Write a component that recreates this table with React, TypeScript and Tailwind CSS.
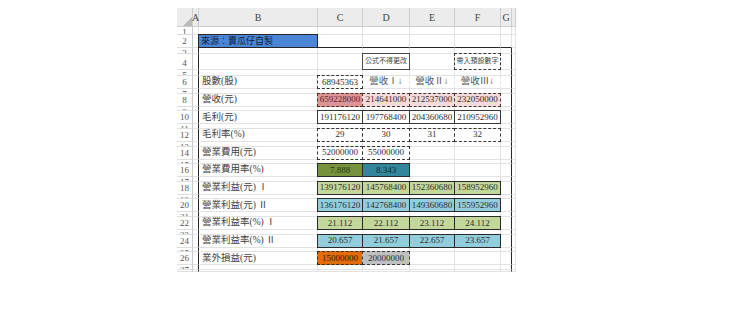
const LETTERS = ['', 'A', 'B', 'C', 'D', 'E', 'F', 'G', ''];
const LAST_ROW = 28;

const solid = 'border border-[#363636]';
const dashed = 'border border-dashed border-[#363636]';
const DARK = 'border-r-[#262626]';

type Spec = { t: string; box?: string; txt?: string };

const label = (t: string): Spec => ({ t, txt: 'justify-start pl-[3px] text-[9.5px] text-[#3d3d3d]' });
const num = (t: string, box: string, txt = 'text-[#2e2e2e]'): Spec => ({ t, box, txt: `text-[9px] ${txt}` });
const head = 'text-[9.5px] text-[#555] [border-right-style:dashed] border-r-[#777]';

const cells: Record<string, Spec> = {
  B2: { t: '來源：賣瓜仔自製', box: 'bg-[#4b86d6] border border-[#262626]', txt: 'justify-start pl-[2px] text-[9px] text-[#0f1d3a]' },
  D4: { t: '公式不得更改', box: 'border border-[#4a4a4a]', txt: 'text-[7px] text-[#444]' },
  F4: { t: '帶入預設數字', box: dashed, txt: 'text-[7px] text-[#444]' },

  B6: label('股數(股)'),
  C6: num('68945363', dashed),
  D6: { t: '營收Ⅰ↓', txt: head },
  E6: { t: '營收Ⅱ↓', txt: head },
  F6: { t: '營收Ⅲ↓', txt: head },

  B8: label('營收(元)'),
  C8: num('659228000', 'bg-[#da9694] border border-dashed border-[#5a2a2a]', 'text-[#6b1f1f]'),
  D8: num('214641000', 'bg-[#f2dcdb] border border-dashed border-[#4a3030]', 'text-[#3b2626]'),
  E8: num('212537000', 'bg-[#f2dcdb] border border-dashed border-[#4a3030]', 'text-[#3b2626]'),
  F8: num('232050000', 'bg-[#f2dcdb] border border-dashed border-[#4a3030]', 'text-[#3b2626]'),

  B10: label('毛利(元)'),
  C10: num('191176120', solid),
  D10: num('197768400', solid),
  E10: num('204360680', solid),
  F10: num('210952960', solid),

  B12: label('毛利率(%)'),
  C12: num('29', dashed),
  D12: num('30', dashed),
  E12: num('31', dashed),
  F12: num('32', dashed),

  B14: label('營業費用(元)'),
  C14: num('52000000', dashed),
  D14: num('55000000', dashed),

  B16: label('營業費用率(%)'),
  C16: num('7.888', 'bg-[#76933c] border border-[#2a2a2a]', 'text-[#2a3514]'),
  D16: num('8.343', 'bg-[#31869b] border border-[#2a2a2a]', 'text-[#102a33]'),

  B18: label('營業利益(元) Ⅰ'),
  C18: num('139176120', 'bg-[#c4d79b] border border-[#2a2a2a]'),
  D18: num('145768400', 'bg-[#c4d79b] border border-[#2a2a2a]'),
  E18: num('152360680', 'bg-[#c4d79b] border border-[#2a2a2a]'),
  F18: num('158952960', 'bg-[#c4d79b] border border-[#2a2a2a]'),

  B20: label('營業利益(元) Ⅱ'),
  C20: num('136176120', 'bg-[#92cddc] border border-[#2a2a2a]'),
  D20: num('142768400', 'bg-[#92cddc] border border-[#2a2a2a]'),
  E20: num('149360680', 'bg-[#92cddc] border border-[#2a2a2a]'),
  F20: num('155952960', 'bg-[#92cddc] border border-[#2a2a2a]'),

  B22: label('營業利益率(%) Ⅰ'),
  C22: num('21.112', 'bg-[#c4d79b] border border-[#2a2a2a]'),
  D22: num('22.112', 'bg-[#c4d79b] border border-[#2a2a2a]'),
  E22: num('23.112', 'bg-[#c4d79b] border border-[#2a2a2a]'),
  F22: num('24.112', 'bg-[#c4d79b] border border-[#2a2a2a]'),

  B24: label('營業利益率(%) Ⅱ'),
  C24: num('20.657', 'bg-[#92cddc] border border-[#2a2a2a]'),
  D24: num('21.657', 'bg-[#92cddc] border border-[#2a2a2a]'),
  E24: num('22.657', 'bg-[#92cddc] border border-[#2a2a2a]'),
  F24: num('23.657', 'bg-[#92cddc] border border-[#2a2a2a]'),

  B26: label('業外損益(元)'),
  C26: num('15000000', 'bg-[#e26b0a] border border-dashed border-[#3a2a1a]', 'text-[#3a1a00]'),
  D26: num('20000000', 'bg-[#bfbfbf] border border-dashed border-[#3a3a3a]'),
};

function HeaderCell({ c }: { c: number }) {
  if (c === 0) {
    return (
      <div className="bg-[#ececec] border-r border-b border-[#cdcdcd]">
        <svg width="16" height="19" viewBox="0 0 16 19">
          <polygon points="6,18 15,18 15,9" fill="#b8b8b8" />
        </svg>
      </div>
    );
  }
  return (
    <div className="flex items-center justify-center bg-[#ececec] border-r border-b border-[#cdcdcd] text-[10px] text-[#444]">
      {LETTERS[c]}
    </div>
  );
}

function RowHeader({ r }: { r: number }) {
  const tall = r % 2 === 0 && r < LAST_ROW;
  return (
    <div
      className={`flex justify-center overflow-hidden border-r border-b border-r-[#c9c9c9] border-b-[#dedede] text-[9px] leading-[9px] text-[#555] ${
        tall ? 'items-end pb-[1px]' : 'items-start pt-[1px]'
      }`}
    >
      {r < LAST_ROW ? r : ''}
    </div>
  );
}

function Cell({ r, c }: { r: number; c: number }) {
  const spec = cells[`${LETTERS[c]}${r}`];
  const rightDark = (c === 1 && r >= 2) || (c === 7 && r >= 3);
  const bottomDark = r === 2 && c >= 3 && c <= 7;
  const grid = `border-r border-b ${rightDark ? DARK : 'border-r-[#e2e2e2]'} ${
    bottomDark ? 'border-b-[#262626]' : 'border-b-[#e2e2e2]'
  }`;

  if (!spec) return <div className={grid} />;

  const base = 'flex items-center justify-center overflow-hidden whitespace-pre leading-none';
  if (spec.box) {
    return <div className={`${base} -ml-px -mt-px ${spec.box} ${spec.txt ?? ''}`}>{spec.t}</div>;
  }
  return <div className={`${base} ${grid} ${spec.txt ?? ''}`}>{spec.t}</div>;
}

export default function App() {
  const rows = Array.from({ length: LAST_ROW }, (_, i) => i + 1);
  const cols = LETTERS.map((_, i) => i);

  return (
    <div className="w-[740px] h-[315px] bg-white pt-[8px] pl-[177px] font-['Liberation_Serif','Noto_Sans_CJK_TC',serif]">
      <div className="grid w-[339px] grid-cols-[16px_6px_119px_45px_47px_45px_46px_11px_4px] grid-rows-[19px_8px_13px_6px_16px_6px_13px_repeat(10,4.65px_13px)_4.65px_2px] overflow-hidden">
        {cols.map((c) => (
          <HeaderCell key={`h${c}`} c={c} />
        ))}
        {rows.map((r) =>
          cols.map((c) => (c === 0 ? <RowHeader key={`${r}-${c}`} r={r} /> : <Cell key={`${r}-${c}`} r={r} c={c} />))
        )}
      </div>
    </div>
  );
}
